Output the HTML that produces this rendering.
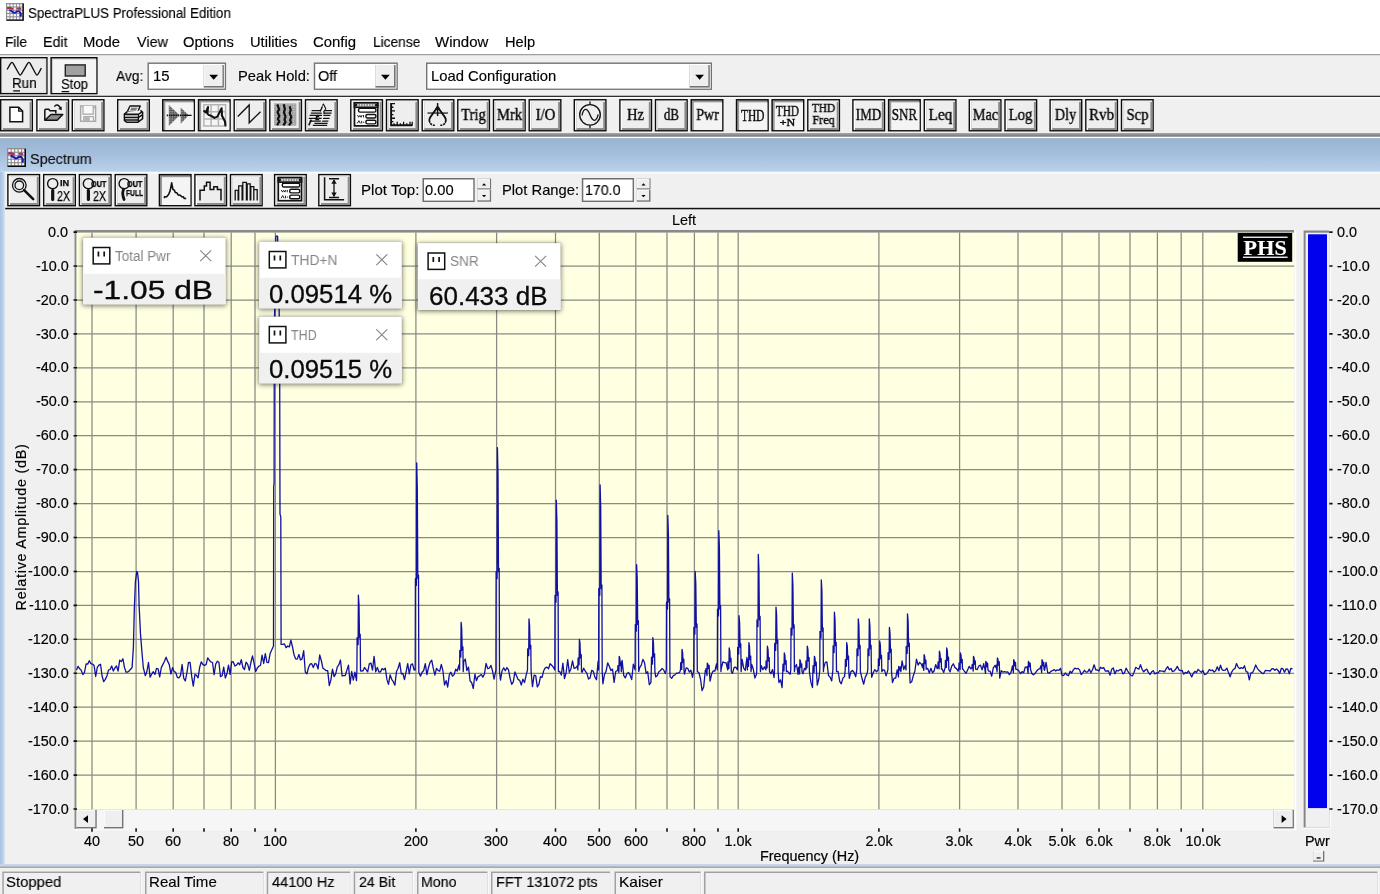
<!DOCTYPE html>
<html><head><meta charset="utf-8"><title>SpectraPLUS Professional Edition</title>
<style>
html,body{margin:0;padding:0;}
body{width:1380px;height:894px;overflow:hidden;background:#f0f0f0;position:relative;font-family:"Liberation Sans",sans-serif;color:#000;}
#root{position:absolute;left:0;top:0;width:1380px;height:894px;opacity:0.999;}
#bg{position:absolute;left:0;top:0;}
.t{position:absolute;white-space:nowrap;line-height:1;-webkit-text-stroke:0.15px currentColor;}
.f{transform-origin:0 50%;}
.t,.yl,.ttl,.val,.s,.i{will-change:transform;}
.bt{position:absolute;}
.bt .s{position:absolute;left:0;right:0;text-align:center;font-family:"Liberation Serif",serif;white-space:nowrap;line-height:1;color:#0a0a0a;transform-origin:50% 50%;-webkit-text-stroke:0.4px #0a0a0a;}
.bt .i{position:absolute;font-family:"Liberation Sans",sans-serif;white-space:nowrap;line-height:1;color:#0a0a0a;transform-origin:0 50%;-webkit-text-stroke:0.25px #0a0a0a;}
.ttl{position:absolute;font-size:14px;color:#858585;line-height:17px;white-space:nowrap;transform-origin:0 50%;}
.val{position:absolute;font-size:25px;line-height:26px;white-space:nowrap;transform-origin:0 50%;color:#0a0a0a;-webkit-text-stroke:0.3px #0a0a0a;}
.yl{position:absolute;font-size:14.4px;line-height:16px;white-space:nowrap;-webkit-text-stroke:0.2px #000;}
</style></head><body><div id="root">
<svg id="bg" width="1380" height="894" viewBox="0 0 1380 894">
<rect x="0.00" y="0.00" width="1380.00" height="54.00" fill="#fff"/>
<g transform="translate(6,3) scale(0.99)"><rect x="0" y="0" width="18" height="18" fill="#8e8e8e"/><g fill="#fff"><rect x="1.2" y="1.3" width="2.2" height="2.2"/><rect x="1.2" y="4.6" width="2.2" height="2.2"/><rect x="1.2" y="7.9" width="2.2" height="2.2"/><rect x="1.2" y="11.2" width="2.2" height="2.2"/><rect x="1.2" y="14.5" width="2.2" height="2.2"/><rect x="4.5" y="1.3" width="2.2" height="2.2"/><rect x="4.5" y="4.6" width="2.2" height="2.2"/><rect x="4.5" y="7.9" width="2.2" height="2.2"/><rect x="4.5" y="11.2" width="2.2" height="2.2"/><rect x="4.5" y="14.5" width="2.2" height="2.2"/><rect x="7.8" y="1.3" width="2.2" height="2.2"/><rect x="7.8" y="4.6" width="2.2" height="2.2"/><rect x="7.8" y="7.9" width="2.2" height="2.2"/><rect x="7.8" y="11.2" width="2.2" height="2.2"/><rect x="7.8" y="14.5" width="2.2" height="2.2"/><rect x="11.1" y="1.3" width="2.2" height="2.2"/><rect x="11.1" y="4.6" width="2.2" height="2.2"/><rect x="11.1" y="7.9" width="2.2" height="2.2"/><rect x="11.1" y="11.2" width="2.2" height="2.2"/><rect x="11.1" y="14.5" width="2.2" height="2.2"/><rect x="14.4" y="1.3" width="2.2" height="2.2"/><rect x="14.4" y="4.6" width="2.2" height="2.2"/><rect x="14.4" y="7.9" width="2.2" height="2.2"/><rect x="14.4" y="11.2" width="2.2" height="2.2"/><rect x="14.4" y="14.5" width="2.2" height="2.2"/></g><path d="M1 5.6C3 4.6 5 4.8 7 6.4M11.4 6.2C12.6 5 14 5.2 15 6.6" stroke="#b02c5c" stroke-width="2.2" fill="none"/><path d="M3.4 7.2C5.4 7.6 6.6 9.6 8.4 9.8C10 10 10.6 8.2 12 8.2C14 8.4 15.4 10.6 15 12.6L14.2 13.6" stroke="#1a1ab4" stroke-width="2" fill="none"/><path d="M17.3 0.6V17.3H0.6" stroke="#0a0a0a" stroke-width="1.4" fill="none"/></g>
<rect x="0.00" y="54.00" width="1380.00" height="1.25" fill="#a0a0a0"/>
<rect x="0.00" y="95.75" width="1380.00" height="1.20" fill="#1a1a1a"/>
<rect x="0.00" y="96.95" width="1380.00" height="1.50" fill="#f9f9f9"/>
<rect x="0.00" y="57.00" width="47.60" height="37.30" fill="#0c0c0c"/>
<rect x="1.40" y="58.40" width="44.80" height="34.50" fill="#f6f6f6"/>
<rect x="2.40" y="59.40" width="43.80" height="33.50" fill="#dcdcdc"/>
<rect x="2.40" y="59.40" width="42.80" height="32.50" fill="#ececec"/>
<g transform="translate(0.00,57.00)"><path transform="translate(-0.1,0.2)" d="M7.2 12.3L10.6 6.4Q12 4 13.4 6.4L19 16.6Q20.3 19 21.6 16.6L27.6 6.4Q29 4 30.4 6.4L35.8 16.6Q37.1 19 38.4 16.6L41.5 11" fill="none" stroke="#111" stroke-width="1.35" stroke-linejoin="round"/><path d="M13.2 33.9h6.8" stroke="#111" stroke-width="1.3"/></g>
<rect x="50.40" y="57.00" width="47.20" height="37.30" fill="#0c0c0c"/>
<rect x="51.80" y="58.40" width="44.40" height="34.50" fill="#cfcfcf"/>
<rect x="53.00" y="59.60" width="43.20" height="33.30" fill="#f5f5f5"/>
<g transform="translate(50.40,57.00)"><rect x="14.9" y="7.9" width="19.9" height="11.1" fill="#a0a0a0" stroke="#222" stroke-width="1.4"/><path d="M11.2 34.6h7.6" stroke="#111" stroke-width="1.3"/></g>
<rect x="147.50" y="62.50" width="78.60" height="27.40" fill="#727272"/>
<rect x="148.90" y="63.90" width="75.90" height="24.70" fill="#fff"/>
<rect x="203.70" y="65.10" width="20.20" height="22.50" fill="#747474"/>
<rect x="203.70" y="65.10" width="18.60" height="20.90" fill="#fafafa"/>
<rect x="204.70" y="66.10" width="17.60" height="19.90" fill="#efefef"/>
<path transform="translate(203.70,65.10)" d="M5.6 9.6H14.4L10 14.6Z" fill="#000"/>
<rect x="313.80" y="62.50" width="84.00" height="27.40" fill="#727272"/>
<rect x="315.20" y="63.90" width="81.30" height="24.70" fill="#fff"/>
<rect x="375.40" y="65.10" width="20.20" height="22.50" fill="#747474"/>
<rect x="375.40" y="65.10" width="18.60" height="20.90" fill="#fafafa"/>
<rect x="376.40" y="66.10" width="17.60" height="19.90" fill="#efefef"/>
<path transform="translate(375.40,65.10)" d="M5.6 9.6H14.4L10 14.6Z" fill="#000"/>
<rect x="426.00" y="62.50" width="286.00" height="27.40" fill="#727272"/>
<rect x="427.40" y="63.90" width="283.30" height="24.70" fill="#fff"/>
<rect x="689.60" y="65.10" width="20.20" height="22.50" fill="#747474"/>
<rect x="689.60" y="65.10" width="18.60" height="20.90" fill="#fafafa"/>
<rect x="690.60" y="66.10" width="17.60" height="19.90" fill="#efefef"/>
<path transform="translate(689.60,65.10)" d="M5.6 9.6H14.4L10 14.6Z" fill="#000"/>
<rect x="0.00" y="99.05" width="33.00" height="32.40" fill="#0c0c0c"/>
<rect x="1.40" y="100.45" width="30.20" height="29.60" fill="#fdfdfd"/>
<rect x="2.80" y="101.85" width="28.80" height="28.20" fill="#8c8c8c"/>
<rect x="2.80" y="101.85" width="26.80" height="26.20" fill="#eeeeee"/>
<g transform="translate(0.00,99.05)"><path d="M9.9 8.3H18.7L22.6 12V22.6H9.9Z" fill="#fff" stroke="#111" stroke-width="1.5"/><path d="M18.7 8.3V12H22.6" stroke="#111" fill="none" stroke-width="1.3"/></g>
<rect x="36.20" y="99.05" width="33.00" height="32.40" fill="#0c0c0c"/>
<rect x="37.60" y="100.45" width="30.20" height="29.60" fill="#fdfdfd"/>
<rect x="39.00" y="101.85" width="28.80" height="28.20" fill="#8c8c8c"/>
<rect x="39.00" y="101.85" width="26.80" height="26.20" fill="#eeeeee"/>
<g transform="translate(36.20,99.05)"><path d="M8.6 21V11.2Q8.6 10.3 9.6 10.3H12.6L13.8 11.8H19.6V14.5" stroke="#111" fill="none" stroke-width="1.5"/><path d="M14.8 15.4H26.6L20.9 21.2H8.6Z" fill="#8c8c8c" stroke="#111" stroke-width="1.4" stroke-linejoin="round"/><path d="M18.2 7.6Q20.6 4.6 23 7.2L24.4 9" stroke="#111" fill="none" stroke-width="1.45"/><path d="M25.6 11.2L22 9.9L25.4 7.4Z" fill="#111"/></g>
<rect x="71.60" y="99.05" width="33.00" height="32.40" fill="#0c0c0c"/>
<rect x="73.00" y="100.45" width="30.20" height="29.60" fill="#fdfdfd"/>
<rect x="74.40" y="101.85" width="28.80" height="28.20" fill="#8c8c8c"/>
<rect x="74.40" y="101.85" width="26.80" height="26.20" fill="#eeeeee"/>
<g transform="translate(71.60,99.05)"><rect x="9" y="7" width="15" height="15.2" fill="#f4f4f4" stroke="#a6a6a6" stroke-width="1.4"/><path d="M11.4 7V15H21.6V7" fill="#fafafa" stroke="#a6a6a6" stroke-width="1.2"/><rect x="12.2" y="17.6" width="9.6" height="4.6" fill="#f8f8f8" stroke="#a6a6a6" stroke-width="1.1"/><rect x="12.6" y="18" width="5.6" height="4" fill="#b4b4b4"/><rect x="22.2" y="8" width="1" height="1.6" fill="#aaa"/></g>
<rect x="117.00" y="99.05" width="33.00" height="32.40" fill="#0c0c0c"/>
<rect x="118.40" y="100.45" width="30.20" height="29.60" fill="#fdfdfd"/>
<rect x="119.80" y="101.85" width="28.80" height="28.20" fill="#8c8c8c"/>
<rect x="119.80" y="101.85" width="26.80" height="26.20" fill="#eeeeee"/>
<g transform="translate(117.00,99.05)"><path d="M13 6.9H23.2L20.8 12.8H10.2Z" fill="#f4f4f4" stroke="#111" stroke-width="1.4" stroke-linejoin="round"/><path d="M14 9.2H20.4M13.4 10.9H19.4" stroke="#555" stroke-width="1.2"/><path d="M10.2 12.8L7.4 15V21.4L9.6 23.2H21L25.6 19.6V13.2L23.4 11.4" fill="#f0f0f0" stroke="#111" stroke-width="1.5" stroke-linejoin="round"/><path d="M7.4 15.2H21.4L25.4 12.6M7.6 18.4H21.4L25.4 15.8M7.6 21H21.2M21.4 15.2V23" stroke="#111" fill="none" stroke-width="1.4"/><path d="M9 16.9H20" stroke="#999" stroke-width="1.4"/></g>
<rect x="162.00" y="99.05" width="33.00" height="32.40" fill="#0c0c0c"/>
<rect x="163.40" y="100.45" width="30.20" height="29.60" fill="#989898"/>
<rect x="165.30" y="102.35" width="28.30" height="27.70" fill="#f4f4f4"/>
<g transform="translate(162.00,99.05)"><defs><pattern id="ht" width="1.7" height="1.7" patternUnits="userSpaceOnUse"><rect width="1.7" height="1.7" fill="#5e5e5e"/><rect x="0" y="0" width="0.75" height="0.75" fill="#cfcfcf"/></pattern></defs><path d="M6.8 5.9L17.6 16.3L6.8 27Z" fill="url(#ht)"/><path d="M18.7 8.4L26.7 16.3L18.7 24.6Z" fill="url(#ht)"/><path d="M4.8 16.3H24" stroke="#111" stroke-width="1.9" stroke-dasharray="1.4 0.8"/><path d="M22 16.3H29.6" stroke="#111" stroke-width="1.3"/></g>
<rect x="197.80" y="99.05" width="33.00" height="32.40" fill="#0c0c0c"/>
<rect x="199.20" y="100.45" width="30.20" height="29.60" fill="#989898"/>
<rect x="201.10" y="102.35" width="28.30" height="27.70" fill="#f4f4f4"/>
<g transform="translate(197.80,99.05)"><path d="M6.1 5.7H27.8V27H6.1ZM13.3 5.7V27M20.6 5.7V27M6.1 12.8H27.8M6.1 20H27.8" stroke="#b4b4b4" stroke-width="1.5" fill="#f6f6f6"/><path d="M6.3 12L8 13.4L10.2 8L9.6 14.6Q10.4 16.4 13 16.6L16.6 18.8L19.6 17.6L23.8 9.2L24.2 16.6L27.2 22.4L27.6 26.4" stroke="#111" fill="none" stroke-width="2.1" stroke-linejoin="round" stroke-linecap="round"/></g>
<rect x="233.50" y="99.05" width="33.00" height="32.40" fill="#0c0c0c"/>
<rect x="234.90" y="100.45" width="30.20" height="29.60" fill="#fdfdfd"/>
<rect x="236.30" y="101.85" width="28.80" height="28.20" fill="#8c8c8c"/>
<rect x="236.30" y="101.85" width="26.80" height="26.20" fill="#eeeeee"/>
<g transform="translate(233.50,99.05)"><path d="M4.3 17.4L15.7 5.9V23.8L27 12.6" stroke="#111" fill="none" stroke-width="1.35" stroke-linejoin="miter"/></g>
<rect x="269.10" y="99.05" width="33.00" height="32.40" fill="#0c0c0c"/>
<rect x="270.50" y="100.45" width="30.20" height="29.60" fill="#fdfdfd"/>
<rect x="271.90" y="101.85" width="28.80" height="28.20" fill="#8c8c8c"/>
<rect x="271.90" y="101.85" width="26.80" height="26.20" fill="#eeeeee"/>
<g transform="translate(269.10,99.05)"><defs><pattern id="dt" width="2.4" height="2.4" patternUnits="userSpaceOnUse"><rect width="2.4" height="2.4" fill="#9c9c9c"/><rect x="0.2" y="0.2" width="1.1" height="1.1" fill="#d8d8d8"/></pattern></defs><rect x="4.9" y="4.4" width="22.4" height="22.3" fill="url(#dt)"/><path d="M8.2 5.4L10 10.4L8.4 13L10.2 17L8.8 20L10.2 22.4L8 26.2" stroke="#111" fill="none" stroke-width="2.2" stroke-linejoin="round"/><path d="M14.6 5.2L15.8 10L14.8 13.4L16.4 17.6L15.4 20.6L16.4 23L14.2 26.4" stroke="#111" fill="none" stroke-width="2.2" stroke-linejoin="round"/><path d="M20.6 7.2L21.6 11L20.6 14L22.2 18L21 21L22 23.4L19.8 26.4" stroke="#111" fill="none" stroke-width="2.2" stroke-linejoin="round"/></g>
<rect x="304.80" y="99.05" width="33.00" height="32.40" fill="#0c0c0c"/>
<rect x="306.20" y="100.45" width="30.20" height="29.60" fill="#fdfdfd"/>
<rect x="307.60" y="101.85" width="28.80" height="28.20" fill="#8c8c8c"/>
<rect x="307.60" y="101.85" width="26.80" height="26.20" fill="#eeeeee"/>
<g transform="translate(304.80,99.05)"><path d="M6.8 11.6H27.2M6 14H26.8M4.8 16.4H25.6M4 19.2H24.8M4.8 22H23.6M9.6 24.4H22.8M8 26.4H22.4" stroke="#111" stroke-width="1.25"/><path d="M15.4 12.4L18.6 5.2L20.8 9.6L19 12L19.4 15" fill="#f0f0f0" stroke="#111" stroke-width="1.4" stroke-linejoin="round"/><path d="M18 6.4L19.6 9.6L17.6 12.4L18 18L16.4 22.8" stroke="#f0f0f0" stroke-width="1.3" fill="none"/><path d="M11.2 16.4Q12.8 15 14.4 16.4V21.2H10.4Z" fill="#111"/><path d="M4 26.4L6.6 20.6" stroke="#111" stroke-width="1.6"/><path d="M12.8 18.2h1v1h-1z" fill="#fff"/></g>
<rect x="350.10" y="99.05" width="33.00" height="32.40" fill="#0c0c0c"/>
<rect x="351.50" y="100.45" width="30.20" height="29.60" fill="#fdfdfd"/>
<rect x="352.90" y="101.85" width="28.80" height="28.20" fill="#8c8c8c"/>
<rect x="352.90" y="101.85" width="26.80" height="26.20" fill="#eeeeee"/>
<g transform="translate(350.10,99.05)"><rect x="4.4" y="3.8" width="23.2" height="23" fill="#fff" stroke="#111" stroke-width="1.7"/><rect x="4.4" y="3.8" width="23.2" height="4.4" fill="#fff" stroke="#111" stroke-width="1.7"/><path d="M7.6 6H24.4" stroke="#333" stroke-width="1.5" stroke-dasharray="0.8 0.8"/><path d="M5 6H7M25 6H27" stroke="#111" stroke-width="2.6"/><rect x="8.4" y="9.3" width="17.4" height="3.8" rx="1.6" fill="#fff" stroke="#111" stroke-width="1.4"/><rect x="15.8" y="15.4" width="10" height="3.6" rx="1.5" fill="#fff" stroke="#111" stroke-width="1.4"/><rect x="15.8" y="21.2" width="10" height="3.6" rx="1.5" fill="#fff" stroke="#111" stroke-width="1.4"/><path d="M7.4 16L8.6 18.2L9.8 16.4L11 18.2L12 16M13.4 16V18.4M7.2 24.4L8.8 21.6L10.2 24.4M11.6 21.8V24.4M13 23.2h1.2" stroke="#222" stroke-width="1" fill="none"/></g>
<rect x="385.80" y="99.05" width="33.00" height="32.40" fill="#0c0c0c"/>
<rect x="387.20" y="100.45" width="30.20" height="29.60" fill="#fdfdfd"/>
<rect x="388.60" y="101.85" width="28.80" height="28.20" fill="#8c8c8c"/>
<rect x="388.60" y="101.85" width="26.80" height="26.20" fill="#eeeeee"/>
<g transform="translate(385.80,99.05)"><path d="M5.3 4V26.2H26.8" stroke="#111" fill="none" stroke-width="1.9"/><path d="M5.3 4.6H9.2M5.3 8.2H7.6M5.3 11.9H9.2M5.3 15.6H7.6M5.3 19.2H9.2M5.3 22.6H7.6M8.2 26V24.2M11.4 26V22.6M14.6 26V24.2M17.8 26V22.6M21 26V24.2M24.2 26V22.6M26.4 26V22.6" stroke="#111" stroke-width="1.3"/></g>
<rect x="421.50" y="99.05" width="33.00" height="32.40" fill="#0c0c0c"/>
<rect x="422.90" y="100.45" width="30.20" height="29.60" fill="#fdfdfd"/>
<rect x="424.30" y="101.85" width="28.80" height="28.20" fill="#8c8c8c"/>
<rect x="424.30" y="101.85" width="26.80" height="26.20" fill="#eeeeee"/>
<g transform="translate(421.50,99.05)"><path d="M6 14H26.4" stroke="#111" stroke-width="1.2"/><path d="M16.1 4V17" stroke="#111" stroke-width="1.5"/><path d="M15.7 8.6L10.6 15.6Q6.2 21 8.6 23.6" stroke="#111" fill="none" stroke-width="1.8"/><path d="M16.5 8.6L21.6 15.6Q26 21 23.6 23.6" stroke="#111" fill="none" stroke-width="1.8"/><path d="M8.8 24.2Q10.6 26.4 13.4 26.2M23.4 24.2Q21.6 26.4 18.8 26.2" stroke="#111" fill="none" stroke-width="1.7" stroke-dasharray="2.2 1"/><circle cx="16.1" cy="9.2" r="1.9" fill="#111"/></g>
<rect x="457.10" y="99.05" width="33.00" height="32.40" fill="#0c0c0c"/>
<rect x="458.50" y="100.45" width="30.20" height="29.60" fill="#fdfdfd"/>
<rect x="459.90" y="101.85" width="28.80" height="28.20" fill="#8c8c8c"/>
<rect x="459.90" y="101.85" width="26.80" height="26.20" fill="#eeeeee"/>
<rect x="492.80" y="99.05" width="33.00" height="32.40" fill="#0c0c0c"/>
<rect x="494.20" y="100.45" width="30.20" height="29.60" fill="#fdfdfd"/>
<rect x="495.60" y="101.85" width="28.80" height="28.20" fill="#8c8c8c"/>
<rect x="495.60" y="101.85" width="26.80" height="26.20" fill="#eeeeee"/>
<rect x="528.50" y="99.05" width="33.00" height="32.40" fill="#0c0c0c"/>
<rect x="529.90" y="100.45" width="30.20" height="29.60" fill="#fdfdfd"/>
<rect x="531.30" y="101.85" width="28.80" height="28.20" fill="#8c8c8c"/>
<rect x="531.30" y="101.85" width="26.80" height="26.20" fill="#eeeeee"/>
<rect x="573.60" y="99.05" width="33.00" height="32.40" fill="#0c0c0c"/>
<rect x="575.00" y="100.45" width="30.20" height="29.60" fill="#fdfdfd"/>
<rect x="576.40" y="101.85" width="28.80" height="28.20" fill="#8c8c8c"/>
<rect x="576.40" y="101.85" width="26.80" height="26.20" fill="#eeeeee"/>
<g transform="translate(573.60,99.05)"><circle cx="16.4" cy="15.8" r="10.3" stroke="#111" fill="none" stroke-width="1.35"/><path d="M16.4 2.4V5.4M16.4 26.2V29.2" stroke="#111" stroke-width="1.3"/><path d="M8.4 16.4C10 8.4 13.6 8.6 16.4 15.8S22.8 23.4 24.6 15.4" stroke="#111" fill="none" stroke-width="1.35"/></g>
<rect x="619.20" y="99.05" width="33.00" height="32.40" fill="#0c0c0c"/>
<rect x="620.60" y="100.45" width="30.20" height="29.60" fill="#fdfdfd"/>
<rect x="622.00" y="101.85" width="28.80" height="28.20" fill="#8c8c8c"/>
<rect x="622.00" y="101.85" width="26.80" height="26.20" fill="#eeeeee"/>
<rect x="654.80" y="99.05" width="33.00" height="32.40" fill="#0c0c0c"/>
<rect x="656.20" y="100.45" width="30.20" height="29.60" fill="#fdfdfd"/>
<rect x="657.60" y="101.85" width="28.80" height="28.20" fill="#8c8c8c"/>
<rect x="657.60" y="101.85" width="26.80" height="26.20" fill="#eeeeee"/>
<rect x="690.50" y="99.05" width="33.00" height="32.40" fill="#0c0c0c"/>
<rect x="691.90" y="100.45" width="30.20" height="29.60" fill="#989898"/>
<rect x="693.80" y="102.35" width="28.30" height="27.70" fill="#f4f4f4"/>
<rect x="735.80" y="99.05" width="33.00" height="32.40" fill="#0c0c0c"/>
<rect x="737.20" y="100.45" width="30.20" height="29.60" fill="#989898"/>
<rect x="739.10" y="102.35" width="28.30" height="27.70" fill="#f4f4f4"/>
<rect x="771.40" y="99.05" width="33.00" height="32.40" fill="#0c0c0c"/>
<rect x="772.80" y="100.45" width="30.20" height="29.60" fill="#989898"/>
<rect x="774.70" y="102.35" width="28.30" height="27.70" fill="#f4f4f4"/>
<rect x="807.10" y="99.05" width="33.00" height="32.40" fill="#0c0c0c"/>
<rect x="808.50" y="100.45" width="30.20" height="29.60" fill="#fdfdfd"/>
<rect x="809.90" y="101.85" width="28.80" height="28.20" fill="#8c8c8c"/>
<rect x="809.90" y="101.85" width="26.80" height="26.20" fill="#eeeeee"/>
<rect x="852.20" y="99.05" width="33.00" height="32.40" fill="#0c0c0c"/>
<rect x="853.60" y="100.45" width="30.20" height="29.60" fill="#fdfdfd"/>
<rect x="855.00" y="101.85" width="28.80" height="28.20" fill="#8c8c8c"/>
<rect x="855.00" y="101.85" width="26.80" height="26.20" fill="#eeeeee"/>
<rect x="887.90" y="99.05" width="33.00" height="32.40" fill="#0c0c0c"/>
<rect x="889.30" y="100.45" width="30.20" height="29.60" fill="#989898"/>
<rect x="891.20" y="102.35" width="28.30" height="27.70" fill="#f4f4f4"/>
<rect x="923.60" y="99.05" width="33.00" height="32.40" fill="#0c0c0c"/>
<rect x="925.00" y="100.45" width="30.20" height="29.60" fill="#fdfdfd"/>
<rect x="926.40" y="101.85" width="28.80" height="28.20" fill="#8c8c8c"/>
<rect x="926.40" y="101.85" width="26.80" height="26.20" fill="#eeeeee"/>
<rect x="968.60" y="99.05" width="33.00" height="32.40" fill="#0c0c0c"/>
<rect x="970.00" y="100.45" width="30.20" height="29.60" fill="#fdfdfd"/>
<rect x="971.40" y="101.85" width="28.80" height="28.20" fill="#8c8c8c"/>
<rect x="971.40" y="101.85" width="26.80" height="26.20" fill="#eeeeee"/>
<rect x="1004.30" y="99.05" width="33.00" height="32.40" fill="#0c0c0c"/>
<rect x="1005.70" y="100.45" width="30.20" height="29.60" fill="#fdfdfd"/>
<rect x="1007.10" y="101.85" width="28.80" height="28.20" fill="#8c8c8c"/>
<rect x="1007.10" y="101.85" width="26.80" height="26.20" fill="#eeeeee"/>
<rect x="1049.40" y="99.05" width="33.00" height="32.40" fill="#0c0c0c"/>
<rect x="1050.80" y="100.45" width="30.20" height="29.60" fill="#fdfdfd"/>
<rect x="1052.20" y="101.85" width="28.80" height="28.20" fill="#8c8c8c"/>
<rect x="1052.20" y="101.85" width="26.80" height="26.20" fill="#eeeeee"/>
<rect x="1085.10" y="99.05" width="33.00" height="32.40" fill="#0c0c0c"/>
<rect x="1086.50" y="100.45" width="30.20" height="29.60" fill="#fdfdfd"/>
<rect x="1087.90" y="101.85" width="28.80" height="28.20" fill="#8c8c8c"/>
<rect x="1087.90" y="101.85" width="26.80" height="26.20" fill="#eeeeee"/>
<rect x="1120.80" y="99.05" width="33.00" height="32.40" fill="#0c0c0c"/>
<rect x="1122.20" y="100.45" width="30.20" height="29.60" fill="#fdfdfd"/>
<rect x="1123.60" y="101.85" width="28.80" height="28.20" fill="#8c8c8c"/>
<rect x="1123.60" y="101.85" width="26.80" height="26.20" fill="#eeeeee"/>
<defs><linearGradient id="gb" x1="0" y1="0" x2="0" y2="1"><stop offset="0" stop-color="#a6a6a6"/><stop offset="0.55" stop-color="#8c8c8c"/><stop offset="1" stop-color="#6c6c6c"/></linearGradient><linearGradient id="gt" x1="0" y1="0" x2="0" y2="1"><stop offset="0" stop-color="#98b3d2"/><stop offset="0.5" stop-color="#a5bfdc"/><stop offset="1" stop-color="#bad2eb"/></linearGradient><linearGradient id="gl" x1="0" y1="0" x2="1" y2="0"><stop offset="0" stop-color="#a6c2e3"/><stop offset="1" stop-color="#c8dbef"/></linearGradient></defs>
<rect x="0.00" y="133.00" width="1380.00" height="3.80" fill="url(#gb)"/>
<rect x="0.00" y="136.80" width="1380.00" height="1.30" fill="#fcfcfc"/>
<rect x="0.00" y="138.10" width="1380.00" height="33.70" fill="url(#gt)"/>
<rect x="0.00" y="171.80" width="1380.00" height="1.90" fill="#f7fafd"/>
<rect x="0.00" y="171.80" width="4.60" height="693.00" fill="url(#gl)"/>
<rect x="0.00" y="864.00" width="1380.00" height="2.30" fill="#c5d6ea"/>
<rect x="0.00" y="866.40" width="1380.00" height="1.40" fill="#9a9a9a"/>
<g transform="translate(7,148) scale(1.055)"><rect x="0" y="0" width="18" height="18" fill="#8e8e8e"/><g fill="#fff"><rect x="1.2" y="1.3" width="2.2" height="2.2"/><rect x="1.2" y="4.6" width="2.2" height="2.2"/><rect x="1.2" y="7.9" width="2.2" height="2.2"/><rect x="1.2" y="11.2" width="2.2" height="2.2"/><rect x="1.2" y="14.5" width="2.2" height="2.2"/><rect x="4.5" y="1.3" width="2.2" height="2.2"/><rect x="4.5" y="4.6" width="2.2" height="2.2"/><rect x="4.5" y="7.9" width="2.2" height="2.2"/><rect x="4.5" y="11.2" width="2.2" height="2.2"/><rect x="4.5" y="14.5" width="2.2" height="2.2"/><rect x="7.8" y="1.3" width="2.2" height="2.2"/><rect x="7.8" y="4.6" width="2.2" height="2.2"/><rect x="7.8" y="7.9" width="2.2" height="2.2"/><rect x="7.8" y="11.2" width="2.2" height="2.2"/><rect x="7.8" y="14.5" width="2.2" height="2.2"/><rect x="11.1" y="1.3" width="2.2" height="2.2"/><rect x="11.1" y="4.6" width="2.2" height="2.2"/><rect x="11.1" y="7.9" width="2.2" height="2.2"/><rect x="11.1" y="11.2" width="2.2" height="2.2"/><rect x="11.1" y="14.5" width="2.2" height="2.2"/><rect x="14.4" y="1.3" width="2.2" height="2.2"/><rect x="14.4" y="4.6" width="2.2" height="2.2"/><rect x="14.4" y="7.9" width="2.2" height="2.2"/><rect x="14.4" y="11.2" width="2.2" height="2.2"/><rect x="14.4" y="14.5" width="2.2" height="2.2"/></g><path d="M1 5.6C3 4.6 5 4.8 7 6.4M11.4 6.2C12.6 5 14 5.2 15 6.6" stroke="#b02c5c" stroke-width="2.2" fill="none"/><path d="M3.4 7.2C5.4 7.6 6.6 9.6 8.4 9.8C10 10 10.6 8.2 12 8.2C14 8.4 15.4 10.6 15 12.6L14.2 13.6" stroke="#1a1ab4" stroke-width="2" fill="none"/><path d="M17.3 0.6V17.3H0.6" stroke="#0a0a0a" stroke-width="1.4" fill="none"/></g>
<rect x="7.20" y="173.90" width="33.00" height="32.50" fill="#0c0c0c"/>
<rect x="8.60" y="175.30" width="30.20" height="29.70" fill="#fdfdfd"/>
<rect x="10.00" y="176.70" width="28.80" height="28.30" fill="#8c8c8c"/>
<rect x="10.00" y="176.70" width="26.80" height="26.30" fill="#eeeeee"/>
<g transform="translate(7.20,173.90)"><circle cx="12.1" cy="11.4" r="6.8" stroke="#111" fill="none" stroke-width="1.3"/><circle cx="12.1" cy="11.4" r="4.3" stroke="#111" fill="none" stroke-width="1.3"/><path d="M16.9 16.2L26 25.2" stroke="#111" stroke-width="2.6" stroke-linecap="round"/></g>
<rect x="43.00" y="173.90" width="33.00" height="32.50" fill="#0c0c0c"/>
<rect x="44.40" y="175.30" width="30.20" height="29.70" fill="#fdfdfd"/>
<rect x="45.80" y="176.70" width="28.80" height="28.30" fill="#8c8c8c"/>
<rect x="45.80" y="176.70" width="26.80" height="26.30" fill="#eeeeee"/>
<g transform="translate(43.00,173.90)"><circle cx="9.7" cy="9.8" r="5.1" stroke="#111" fill="none" stroke-width="1.4"/><path d="M9.7 16.6V25.6" stroke="#111" stroke-width="3.2" stroke-linecap="round"/><path d="M9.7 14.9V16.5" stroke="#111" stroke-width="1.3"/></g>
<rect x="78.70" y="173.90" width="33.00" height="32.50" fill="#0c0c0c"/>
<rect x="80.10" y="175.30" width="30.20" height="29.70" fill="#fdfdfd"/>
<rect x="81.50" y="176.70" width="28.80" height="28.30" fill="#8c8c8c"/>
<rect x="81.50" y="176.70" width="26.80" height="26.30" fill="#eeeeee"/>
<g transform="translate(78.70,173.90)"><circle cx="9.7" cy="9.8" r="5.1" stroke="#111" fill="none" stroke-width="1.4"/><path d="M9.7 16.6V25.6" stroke="#111" stroke-width="3.2" stroke-linecap="round"/><path d="M9.7 14.9V16.5" stroke="#111" stroke-width="1.3"/></g>
<rect x="114.50" y="173.90" width="33.00" height="32.50" fill="#0c0c0c"/>
<rect x="115.90" y="175.30" width="30.20" height="29.70" fill="#fdfdfd"/>
<rect x="117.30" y="176.70" width="28.80" height="28.30" fill="#8c8c8c"/>
<rect x="117.30" y="176.70" width="26.80" height="26.30" fill="#eeeeee"/>
<g transform="translate(114.50,173.90)"><circle cx="9.7" cy="9.8" r="5.1" stroke="#111" fill="none" stroke-width="1.4"/><path d="M9 15.4Q7.6 19 8.6 22.6L9.6 25.6" stroke="#111" stroke-width="2.8" stroke-linecap="round" fill="none"/></g>
<rect x="158.70" y="173.90" width="33.00" height="32.50" fill="#0c0c0c"/>
<rect x="160.10" y="175.30" width="30.20" height="29.70" fill="#989898"/>
<rect x="162.00" y="177.20" width="28.30" height="27.80" fill="#f4f4f4"/>
<g transform="translate(158.70,173.90)"><path d="M5.8 24.4V22.8H8L10 20.4L11.4 17L13 9L14.2 15.4L15.6 16.2L16.6 18.6L18.4 19.2L19.4 21L21.6 21.4L23 22.8L24.6 23L25.6 24.6H27.5" stroke="#111" fill="none" stroke-width="1.6" stroke-linejoin="round"/></g>
<rect x="194.20" y="173.90" width="33.00" height="32.50" fill="#0c0c0c"/>
<rect x="195.60" y="175.30" width="30.20" height="29.70" fill="#fdfdfd"/>
<rect x="197.00" y="176.70" width="28.80" height="28.30" fill="#8c8c8c"/>
<rect x="197.00" y="176.70" width="26.80" height="26.30" fill="#eeeeee"/>
<g transform="translate(194.20,173.90)"><path d="M5.8 26.5V16.4H10.1V12H12.3V8.4H15.9V15.7H19.6V12.8H23.2V15.7H26.8V26.5" stroke="#111" fill="none" stroke-width="1.5"/></g>
<rect x="229.80" y="173.90" width="33.00" height="32.50" fill="#0c0c0c"/>
<rect x="231.20" y="175.30" width="30.20" height="29.70" fill="#fdfdfd"/>
<rect x="232.60" y="176.70" width="28.80" height="28.30" fill="#8c8c8c"/>
<rect x="232.60" y="176.70" width="26.80" height="26.30" fill="#eeeeee"/>
<g transform="translate(229.80,173.90)"><path d="M5.4 26.5V16.4H8.3V26.5M8.9 26.5V12H12.3V26.5M13 26.5V8.4H16.6V26.5M17.4 26.5V9.9H20.4V26.5M21 26.5V12.8H24V26.5M24.2 15.7H27.4V26.5" stroke="#111" fill="none" stroke-width="1.3"/></g>
<rect x="273.90" y="173.90" width="33.00" height="32.50" fill="#0c0c0c"/>
<rect x="275.30" y="175.30" width="30.20" height="29.70" fill="#fdfdfd"/>
<rect x="276.70" y="176.70" width="28.80" height="28.30" fill="#8c8c8c"/>
<rect x="276.70" y="176.70" width="26.80" height="26.30" fill="#eeeeee"/>
<g transform="translate(273.90,173.90)"><rect x="4.4" y="3.8" width="23.2" height="23" fill="#fff" stroke="#111" stroke-width="1.7"/><rect x="4.4" y="3.8" width="23.2" height="4.4" fill="#fff" stroke="#111" stroke-width="1.7"/><path d="M7.6 6H24.4" stroke="#333" stroke-width="1.5" stroke-dasharray="0.8 0.8"/><path d="M5 6H7M25 6H27" stroke="#111" stroke-width="2.6"/><rect x="8.4" y="9.3" width="17.4" height="3.8" rx="1.6" fill="#fff" stroke="#111" stroke-width="1.4"/><rect x="15.8" y="15.4" width="10" height="3.6" rx="1.5" fill="#fff" stroke="#111" stroke-width="1.4"/><rect x="15.8" y="21.2" width="10" height="3.6" rx="1.5" fill="#fff" stroke="#111" stroke-width="1.4"/><path d="M7.4 16L8.6 18.2L9.8 16.4L11 18.2L12 16M13.4 16V18.4M7.2 24.4L8.8 21.6L10.2 24.4M11.6 21.8V24.4M13 23.2h1.2" stroke="#222" stroke-width="1" fill="none"/></g>
<rect x="318.10" y="173.90" width="33.00" height="32.50" fill="#0c0c0c"/>
<rect x="319.50" y="175.30" width="30.20" height="29.70" fill="#fdfdfd"/>
<rect x="320.90" y="176.70" width="28.80" height="28.30" fill="#8c8c8c"/>
<rect x="320.90" y="176.70" width="26.80" height="26.30" fill="#eeeeee"/>
<g transform="translate(318.10,173.90)"><path d="M6.5 3.3V25.8H26" stroke="#111" fill="none" stroke-width="1.5"/><path d="M10.9 4.9H21M10.9 23.5H21" stroke="#111" stroke-width="1.5"/><path d="M15.9 6V22.4" stroke="#111" stroke-width="1.3"/><path d="M15.9 5.4L13.2 9.8H18.6ZM15.9 23L13.2 18.6H18.6Z" fill="#111"/></g>
<rect x="5.20" y="207.80" width="1375.00" height="1.50" fill="#111"/>
<rect x="422.50" y="178.00" width="52.20" height="24.00" fill="#6e6e6e"/>
<rect x="424.00" y="179.50" width="49.30" height="21.10" fill="#fff"/>
<rect x="477.40" y="178.50" width="13.70" height="10.90" fill="#747474"/>
<rect x="477.40" y="178.50" width="12.50" height="9.70" fill="#fafafa"/>
<rect x="478.40" y="179.50" width="11.50" height="8.70" fill="#efefef"/>
<path transform="translate(477.40,178.50)" d="M4.6 7.1H8.8L6.7 4.7Z" fill="#000"/>
<rect x="477.40" y="189.90" width="13.70" height="11.80" fill="#747474"/>
<rect x="477.40" y="189.90" width="12.20" height="10.30" fill="#fafafa"/>
<rect x="478.40" y="190.90" width="11.20" height="9.30" fill="#efefef"/>
<path transform="translate(477.40,189.90)" d="M4.6 5H8.8L6.7 7.4Z" fill="#000"/>
<rect x="581.80" y="178.00" width="52.20" height="24.00" fill="#6e6e6e"/>
<rect x="583.30" y="179.50" width="49.30" height="21.10" fill="#fff"/>
<rect x="636.80" y="178.50" width="13.70" height="10.90" fill="#747474"/>
<rect x="636.80" y="178.50" width="12.50" height="9.70" fill="#fafafa"/>
<rect x="637.80" y="179.50" width="11.50" height="8.70" fill="#efefef"/>
<path transform="translate(636.80,178.50)" d="M4.6 7.1H8.8L6.7 4.7Z" fill="#000"/>
<rect x="636.80" y="189.90" width="13.70" height="11.80" fill="#747474"/>
<rect x="636.80" y="189.90" width="12.20" height="10.30" fill="#fafafa"/>
<rect x="637.80" y="190.90" width="11.20" height="9.30" fill="#efefef"/>
<path transform="translate(636.80,189.90)" d="M4.6 5H8.8L6.7 7.4Z" fill="#000"/>
<rect x="74.50" y="230.00" width="1221.80" height="600.20" fill="#fff"/>
<rect x="74.50" y="230.00" width="1219.60" height="599.00" fill="#8a8a8a"/>
<rect x="76.40" y="232.60" width="1217.70" height="576.60" fill="#ffffe1"/>
<rect x="76.40" y="809.20" width="1217.70" height="20.40" fill="#f6f6f6"/>
<path d="M76.4 266.0H1294.1M76.4 300.0H1294.1M76.4 333.9H1294.1M76.4 367.8H1294.1M76.4 401.8H1294.1M76.4 435.7H1294.1M76.4 469.6H1294.1M76.4 503.6H1294.1M76.4 537.5H1294.1M76.4 571.5H1294.1M76.4 605.4H1294.1M76.4 639.3H1294.1M76.4 673.3H1294.1M76.4 707.2H1294.1M76.4 741.1H1294.1M76.4 775.1H1294.1M92.0 232.6V809.2M136.1 232.6V809.2M173.2 232.6V809.2M204.0 232.6V809.2M231.2 232.6V809.2M255.0 232.6V809.2M275.4 232.6V809.2M415.9 232.6V809.2M496.6 232.6V809.2M555.5 232.6V809.2M599.3 232.6V809.2M635.8 232.6V809.2M667.0 232.6V809.2M694.4 232.6V809.2M718.0 232.6V809.2M738.2 232.6V809.2M878.9 232.6V809.2M959.6 232.6V809.2M1018.0 232.6V809.2M1062.0 232.6V809.2M1099.0 232.6V809.2M1130.0 232.6V809.2M1157.4 232.6V809.2M1181.2 232.6V809.2M1202.8 232.6V809.2" stroke="#8a8a83" stroke-width="1.25" fill="none"/>
<polyline points="76.5,669.9 78.1,666.3 79.7,668.8 81.3,670.4 82.9,674.6 84.5,672.4 86.1,664.0 87.7,664.1 89.3,660.7 90.9,663.6 92.5,664.1 94.1,665.5 95.7,676.5 97.3,667.3 98.9,665.1 100.5,664.2 102.1,676.0 103.7,681.7 105.3,679.4 106.9,676.0 108.5,670.2 110.1,669.5 111.7,666.0 113.3,671.0 114.9,667.9 116.5,666.0 118.1,671.1 119.7,660.1 121.3,661.6 122.9,658.7 124.5,667.6 126.1,672.2 127.7,672.1 129.3,670.7 132.1,667.5 133.4,647.1 134.3,610.1 135.4,581.6 136.8,571.5 137.5,572.5 138.5,581.6 139.1,605.4 140.5,633.9 142.1,653.9 143.3,667.5 145.3,675.7 146.9,671.5 148.5,662.5 150.1,677.1 151.7,674.2 153.3,671.7 154.9,674.5 156.5,668.4 158.1,668.8 159.7,676.8 161.3,667.6 162.9,664.4 164.5,661.3 166.1,657.2 167.7,661.4 169.3,664.6 170.9,674.0 172.5,667.6 174.1,671.5 175.7,672.4 177.3,677.3 178.9,677.9 180.5,675.7 182.1,664.5 183.7,678.1 185.3,681.0 186.9,672.8 188.5,662.3 190.1,662.5 191.7,676.4 193.3,686.2 194.9,674.5 196.5,675.3 198.1,677.8 199.7,667.2 201.3,661.8 202.9,664.6 204.5,665.4 206.1,664.7 207.7,657.9 209.3,660.2 210.9,661.9 212.5,662.5 214.1,674.6 215.7,664.1 217.3,661.2 218.9,662.2 220.5,676.7 222.1,675.8 223.7,667.1 225.3,678.0 226.9,673.8 228.5,665.2 230.1,674.4 231.7,661.6 233.3,662.0 234.9,666.0 236.5,665.1 238.1,662.9 239.7,664.7 241.3,659.7 242.9,667.5 244.5,669.5 246.1,662.2 247.7,664.4 249.3,670.3 250.9,662.5 252.5,655.9 254.1,663.3 255.7,671.6 257.3,668.0 258.9,666.1 260.5,665.5 262.1,655.2 263.7,663.5 265.3,653.6 266.9,662.4 268.5,662.6 270.1,653.5 273.5,646.1 273.7,486.6 274.1,483.2 274.3,333.9 275.9,236.2 277.6,236.2 279.6,333.9 280.0,513.8 280.8,517.2 281.1,644.4 282.9,644.4 284.5,643.9 286.1,647.7 287.7,646.0 289.3,647.0 290.9,640.1 292.5,647.0 294.1,655.0 295.7,658.9 297.3,659.1 298.9,654.5 300.5,660.0 302.1,658.9 303.7,650.7 305.3,672.0 306.9,673.9 308.5,667.5 310.1,664.1 311.7,663.7 313.3,667.6 314.9,663.5 316.5,664.1 318.1,669.0 319.7,655.0 321.3,660.5 322.9,668.2 324.5,669.3 326.1,670.7 327.7,670.6 329.3,685.6 330.9,679.9 332.5,669.1 334.1,676.6 335.7,673.9 337.3,667.0 338.9,664.6 340.5,660.0 342.1,675.9 343.7,675.6 345.3,675.5 346.9,670.1 348.5,665.1 350.1,684.0 351.7,671.5 353.3,680.1 354.9,672.1 356.5,680.7 356.9,669.2 357.1,637.7 358.1,644.5 358.4,595.2 359.0,604.5 359.5,637.7 360.2,634.4 360.5,670.9 361.3,671.0 362.9,670.9 364.5,667.5 366.1,669.6 367.7,671.9 369.3,663.9 370.9,663.0 372.5,670.1 374.1,656.3 375.7,671.9 377.3,667.4 378.9,672.0 380.5,671.9 382.1,668.6 383.7,669.8 385.3,668.1 386.9,679.4 388.5,684.4 390.1,674.8 391.7,679.3 393.3,681.7 394.9,685.2 396.5,671.5 398.1,668.3 399.7,662.7 401.3,673.8 402.9,673.5 404.5,679.7 406.1,671.9 407.7,663.7 409.3,673.9 410.9,664.8 412.5,663.9 414.1,670.0 415.2,669.9 415.4,578.6 416.4,585.4 416.7,462.9 417.3,488.1 417.8,578.6 418.5,575.2 418.8,671.6 418.9,672.2 420.5,676.2 422.1,672.3 423.7,670.5 425.3,663.6 426.9,674.6 428.5,667.5 430.1,662.3 431.7,660.2 433.3,668.4 434.9,675.2 436.5,668.4 438.1,670.4 439.7,671.3 441.3,664.4 442.9,670.7 444.5,685.0 446.1,680.7 447.7,687.0 449.3,674.9 450.9,672.2 452.5,676.2 454.1,674.6 455.7,669.2 457.3,671.0 458.9,664.8 459.6,669.9 459.8,650.4 460.8,657.1 461.1,622.4 461.7,628.5 462.2,650.4 462.9,647.0 463.2,671.6 463.7,661.6 465.3,659.0 466.9,670.6 468.5,667.1 470.1,681.0 471.7,682.8 473.3,688.5 474.9,674.2 476.5,680.6 478.1,676.6 479.7,675.8 481.3,674.6 482.9,677.2 484.5,673.7 486.1,663.4 487.7,668.6 489.3,668.2 490.9,665.4 492.5,670.8 494.1,679.2 495.9,669.9 496.1,571.7 497.1,578.5 497.4,447.6 498.0,474.7 498.5,571.7 499.2,568.3 499.5,671.6 500.5,680.1 502.1,670.7 503.7,667.7 505.3,670.7 506.9,667.6 508.5,669.8 510.1,678.3 511.7,684.3 513.3,681.8 514.9,671.9 516.5,675.8 518.1,679.5 519.7,680.4 521.3,685.0 522.9,679.2 524.5,682.5 526.1,675.4 527.5,669.9 527.7,648.8 528.7,655.6 529.0,619.0 529.6,625.5 530.1,648.8 530.8,645.4 531.1,671.6 532.5,686.7 534.1,675.2 535.7,675.7 537.3,686.8 538.9,684.3 540.5,676.6 542.1,677.3 543.7,670.7 545.3,667.9 546.9,667.1 548.5,668.7 550.1,663.7 551.7,665.3 553.3,667.1 554.8,669.9 555.0,595.4 556.0,602.2 556.3,500.2 556.9,521.0 557.4,595.4 558.1,592.0 558.4,671.6 559.7,671.4 561.3,675.1 562.9,663.2 564.5,678.6 566.1,673.0 567.7,659.6 569.3,672.3 570.9,669.0 572.5,660.8 574.1,668.3 575.7,667.9 577.3,665.8 577.9,669.9 578.1,658.0 579.1,664.8 579.4,639.3 580.0,643.4 580.5,658.0 581.2,654.6 581.5,671.6 582.1,672.2 583.7,668.2 585.3,671.2 586.9,673.4 588.5,679.0 590.1,677.9 591.7,670.3 593.3,671.4 594.9,677.2 596.5,679.7 598.1,661.2 598.6,669.9 598.8,588.5 599.8,595.3 600.1,484.9 600.7,507.5 601.2,588.5 601.9,585.1 602.2,671.6 602.9,683.8 604.5,674.5 606.1,671.1 607.7,662.9 609.3,666.2 610.9,670.5 612.5,669.1 614.1,682.3 615.7,671.5 617.3,670.7 617.7,669.9 617.9,665.6 618.9,672.4 619.2,656.3 619.8,658.3 620.3,665.6 621.0,662.2 621.3,671.6 622.1,660.3 623.7,675.3 625.3,677.9 626.9,673.7 628.5,672.4 630.1,675.1 631.7,679.6 633.3,664.2 635.1,669.9 635.3,624.4 636.3,631.2 636.6,564.7 637.2,577.7 637.7,624.4 638.4,621.0 638.7,671.6 639.7,667.6 641.3,665.2 642.9,659.4 644.5,662.5 646.1,673.3 647.7,671.8 649.3,684.7 650.9,682.6 651.3,669.9 651.5,657.2 652.5,664.0 652.8,637.6 653.4,641.9 653.9,657.2 654.6,653.8 654.9,671.6 655.7,676.9 657.3,675.6 658.9,671.7 660.5,670.5 662.1,668.4 663.7,669.9 665.3,673.6 666.3,669.9 666.5,602.2 667.5,609.0 667.8,515.5 668.4,534.4 668.9,602.2 669.6,598.9 669.9,671.6 670.1,676.9 671.7,678.4 673.3,675.6 674.9,674.9 676.5,673.1 678.1,673.2 679.7,672.2 680.5,669.9 680.7,662.6 681.7,669.4 682.0,649.5 682.6,652.4 683.1,662.6 683.8,659.2 684.1,671.6 684.5,674.1 686.1,667.8 687.7,668.3 689.3,672.1 690.9,670.2 692.5,677.3 693.7,669.9 693.9,627.4 694.9,634.2 695.2,571.5 695.8,583.7 696.3,627.4 697.0,624.1 697.3,671.6 698.9,672.5 700.5,679.0 702.1,690.6 703.7,686.9 705.3,670.5 705.8,669.9 706.0,668.7 707.0,675.5 707.3,663.1 707.9,664.3 708.4,668.7 709.1,665.3 709.4,671.6 710.1,681.2 711.7,673.9 713.3,670.8 714.9,671.1 716.5,664.0 717.3,669.9 717.5,609.1 718.5,615.9 718.8,530.7 719.4,547.8 719.9,609.1 720.6,605.7 720.9,671.6 721.3,668.3 722.9,661.8 724.5,662.7 726.1,662.8 727.7,669.9 727.9,661.8 728.9,668.6 729.2,647.8 729.8,650.9 730.3,661.8 731.0,658.4 731.3,671.6 732.5,673.4 734.1,667.3 735.7,667.2 737.5,669.9 737.7,647.3 738.7,654.1 739.0,615.6 739.6,622.5 740.1,647.3 740.8,643.9 741.1,671.6 742.1,659.4 743.7,668.2 745.3,670.5 746.9,657.5 747.4,669.9 747.6,659.5 748.6,666.3 748.9,642.7 749.5,646.4 750.0,659.5 750.7,656.1 751.0,671.6 751.7,664.5 753.3,669.3 754.9,678.0 756.5,674.3 756.8,669.9 757.0,619.8 758.0,626.6 758.3,554.5 758.9,568.7 759.4,619.8 760.1,616.4 760.4,671.6 761.3,665.7 762.9,669.7 764.5,666.9 765.9,669.9 766.1,661.0 767.1,667.8 767.4,646.1 768.0,649.4 768.5,661.0 769.2,657.6 769.5,671.6 770.9,673.7 772.5,669.6 774.1,677.5 774.5,669.9 774.7,643.5 775.7,650.3 776.0,607.1 776.6,615.0 777.1,643.5 777.8,640.1 778.1,671.6 778.9,682.5 780.5,679.9 782.1,687.5 782.8,669.9 783.0,664.1 784.0,670.9 784.3,652.9 784.9,655.3 785.4,664.1 786.1,660.7 786.4,671.6 786.9,670.7 788.5,672.4 790.1,674.2 790.8,669.9 791.0,628.2 792.0,635.0 792.3,573.1 792.9,585.2 793.4,628.2 794.1,624.8 794.4,671.6 794.9,667.5 796.5,664.5 798.1,674.3 798.4,669.9 798.6,667.2 799.6,673.9 799.9,659.7 800.5,661.3 801.0,667.2 801.7,663.8 802.0,671.6 802.9,673.8 804.5,668.3 805.8,669.9 806.0,661.0 807.0,667.8 807.3,646.1 807.9,649.4 808.4,661.0 809.1,657.6 809.4,671.6 810.9,682.4 812.5,687.6 812.9,669.9 813.1,665.6 814.1,672.4 814.4,656.3 815.0,658.3 815.5,665.6 816.2,662.2 816.5,671.6 817.3,685.2 818.9,678.5 819.8,669.9 820.0,631.3 821.0,638.1 821.3,579.9 821.9,591.1 822.4,631.3 823.1,627.9 823.4,671.6 823.7,667.9 825.3,662.4 826.9,661.9 828.5,675.5 830.1,677.1 831.7,680.9 832.9,669.9 833.1,645.8 834.1,652.6 834.4,612.2 835.0,619.5 835.5,645.8 836.2,642.4 836.5,671.6 838.1,671.5 839.7,681.3 841.3,683.8 842.9,678.1 844.5,676.6 845.2,669.9 845.4,659.5 846.4,666.3 846.7,642.7 847.3,646.4 847.8,659.5 848.5,656.1 848.8,671.6 849.3,678.3 850.9,671.6 852.5,670.5 854.1,672.5 855.7,676.7 856.8,669.9 857.0,648.8 858.0,655.6 858.3,619.0 858.9,625.5 859.4,648.8 860.1,645.4 860.4,671.6 862.1,678.8 863.7,684.2 865.3,677.1 866.9,674.1 867.8,669.9 868.0,648.8 869.0,655.6 869.3,619.0 869.9,625.5 870.4,648.8 871.1,645.4 871.4,671.6 871.7,677.3 873.3,672.5 874.9,669.5 876.5,671.8 878.2,669.9 878.4,658.8 879.4,665.5 879.7,641.0 880.3,644.9 880.8,658.8 881.5,655.4 881.8,671.6 882.9,669.8 884.5,670.1 886.1,675.9 887.9,669.9 888.1,652.6 889.1,659.4 889.4,627.4 890.0,632.9 890.5,652.6 891.2,649.2 891.5,671.6 892.5,682.6 894.1,678.1 895.7,678.2 897.2,669.9 897.4,670.2 898.4,677.0 898.7,666.5 899.3,667.3 899.8,670.2 900.5,666.8 900.8,671.6 902.1,660.8 903.7,669.5 905.3,665.4 906.0,669.9 906.2,646.5 907.2,653.3 907.5,613.9 908.1,621.0 908.6,646.5 909.3,643.1 909.6,671.6 910.1,682.9 911.7,681.8 913.3,675.7 914.9,671.0 916.5,659.2 918.1,665.1 919.7,662.4 921.3,664.1 922.6,667.5 922.8,663.6 923.8,670.3 924.1,654.6 924.7,656.5 925.2,663.6 925.9,660.2 926.2,669.2 927.7,668.4 929.3,673.0 930.9,668.3 932.5,672.8 934.1,671.0 935.7,664.6 937.3,668.7 937.9,667.5 938.1,662.0 939.1,668.8 939.4,651.2 940.0,653.6 940.5,662.0 941.2,658.6 941.5,669.2 942.1,669.0 943.7,672.5 945.2,667.5 945.4,660.5 946.4,667.3 946.7,647.8 947.3,650.6 947.8,660.5 948.5,657.1 948.8,669.2 950.1,671.9 951.7,666.1 953.3,663.8 954.9,667.6 956.5,668.6 958.1,671.1 958.9,667.5 959.1,662.8 960.1,669.6 960.4,652.9 961.0,655.1 961.5,662.8 962.2,659.4 962.5,669.2 962.9,669.0 964.5,671.5 966.1,673.2 967.7,669.8 969.3,666.4 970.9,668.9 972.0,667.5 972.2,664.3 973.2,671.1 973.5,656.3 974.1,658.0 974.6,664.3 975.3,660.9 975.6,669.2 977.3,669.6 978.9,665.8 980.5,665.2 982.1,669.9 983.7,663.6 984.3,667.5 984.5,666.6 985.5,673.4 985.8,661.4 986.4,662.5 986.9,666.6 987.6,663.2 987.9,669.2 988.5,671.1 990.1,671.1 991.7,676.2 993.3,667.9 994.9,665.5 995.9,667.5 996.1,665.1 997.1,671.9 997.4,658.0 998.0,659.5 998.5,665.1 999.2,661.7 999.5,669.2 999.7,678.0 1001.3,670.6 1002.9,672.1 1004.5,671.6 1006.1,672.1 1007.7,671.8 1009.3,674.6 1010.9,672.5 1012.2,667.5 1012.4,665.8 1013.4,672.6 1013.7,659.7 1014.3,661.0 1014.8,665.8 1015.5,662.5 1015.8,669.2 1017.3,669.6 1018.9,671.0 1020.5,673.6 1022.1,671.6 1023.7,672.7 1025.3,667.0 1026.9,667.5 1027.1,666.6 1028.1,673.4 1028.4,661.4 1029.0,662.5 1029.5,666.6 1030.2,663.2 1030.5,669.2 1031.7,673.3 1033.3,674.8 1034.9,673.7 1036.5,671.3 1038.1,669.5 1039.7,668.6 1040.5,667.5 1040.7,665.8 1041.7,672.6 1042.0,659.7 1042.6,661.0 1043.1,665.8 1043.8,662.5 1044.1,669.2 1044.5,670.3 1046.1,662.3 1047.7,672.6 1049.3,673.2 1050.9,671.4 1052.5,670.7 1054.1,669.6 1055.7,671.0 1057.3,669.8 1058.9,670.3 1060.5,668.3 1062.1,675.4 1063.7,675.5 1065.3,673.0 1066.9,674.9 1068.5,675.8 1070.1,671.2 1071.7,673.0 1073.3,669.9 1074.9,668.2 1076.5,668.8 1078.1,668.4 1079.7,670.1 1081.3,674.7 1082.9,672.7 1084.5,670.3 1086.1,672.2 1087.7,671.8 1089.3,669.1 1090.9,672.7 1092.5,669.8 1094.1,664.8 1095.7,669.8 1097.3,670.0 1098.9,670.9 1100.5,667.2 1102.1,668.4 1103.7,667.6 1105.3,671.1 1106.9,671.0 1108.5,671.0 1110.1,675.2 1111.7,669.3 1113.3,668.0 1114.9,673.8 1116.5,670.4 1118.1,671.0 1119.7,669.8 1121.3,669.5 1122.9,673.9 1124.5,672.8 1126.1,668.1 1127.7,671.0 1129.3,673.4 1130.9,675.3 1132.5,675.8 1134.1,672.3 1135.7,667.4 1137.3,668.3 1138.9,669.1 1140.5,664.7 1142.1,669.3 1143.7,671.8 1145.3,670.0 1146.9,669.2 1148.5,672.6 1150.1,674.5 1151.7,671.8 1153.3,670.7 1154.9,674.0 1156.5,672.8 1158.1,673.0 1159.7,670.7 1161.3,671.1 1162.9,671.2 1164.5,671.9 1166.1,668.8 1167.7,666.6 1169.3,669.8 1170.9,668.4 1172.5,671.6 1174.1,671.0 1175.7,669.1 1177.3,666.4 1178.9,669.8 1180.5,670.6 1182.1,670.3 1183.7,674.2 1185.3,672.4 1186.9,673.2 1188.5,671.0 1190.1,673.7 1191.7,676.9 1193.3,673.5 1194.9,671.4 1196.5,672.5 1198.1,669.4 1199.7,670.9 1201.3,672.4 1202.9,670.4 1204.5,674.5 1206.1,674.1 1207.7,672.4 1209.3,669.5 1210.9,670.7 1212.5,670.0 1214.1,672.1 1215.7,670.7 1217.3,666.8 1218.9,670.7 1220.5,665.1 1222.1,669.8 1223.7,670.4 1225.3,670.2 1226.9,668.1 1228.5,672.6 1230.1,676.8 1231.7,672.1 1233.3,669.5 1234.9,668.7 1236.5,663.5 1238.1,667.1 1239.7,668.6 1241.3,667.6 1242.9,668.5 1244.5,665.8 1246.1,671.6 1247.7,672.1 1249.3,679.8 1250.9,672.9 1252.5,672.7 1254.1,669.5 1255.7,665.0 1257.3,668.3 1258.9,670.3 1260.5,671.8 1262.1,673.3 1263.7,673.5 1265.3,670.5 1266.9,670.6 1268.5,670.6 1270.1,671.2 1271.7,668.8 1273.3,668.7 1274.9,670.3 1276.5,669.0 1278.1,670.4 1279.7,673.5 1281.3,668.5 1282.9,668.7 1284.5,672.2 1286.1,668.9 1287.7,669.1 1289.3,673.9 1290.9,668.3 1292.5,668.9" fill="none" stroke="#1010a4" stroke-width="1.3" stroke-linejoin="round"/>
<rect x="76.40" y="810.00" width="20.30" height="18.40" fill="#747474"/>
<rect x="76.40" y="810.00" width="18.80" height="16.90" fill="#fafafa"/>
<rect x="77.40" y="811.00" width="17.80" height="15.90" fill="#efefef"/>
<path transform="translate(76.40,810.00)" d="M11.6 5.2V13L6.6 9.1Z" fill="#000"/>
<rect x="104.00" y="810.00" width="19.40" height="18.40" fill="#747474"/>
<rect x="104.00" y="810.00" width="17.90" height="16.90" fill="#fafafa"/>
<rect x="105.00" y="811.00" width="16.90" height="15.90" fill="#efefef"/>
<rect x="1273.60" y="810.00" width="20.30" height="18.40" fill="#747474"/>
<rect x="1273.60" y="810.00" width="18.80" height="16.90" fill="#fafafa"/>
<rect x="1274.60" y="811.00" width="17.80" height="15.90" fill="#efefef"/>
<path transform="translate(1273.60,810.00)" d="M8 5.2V13L13 9.1Z" fill="#000"/>
<rect x="1237.70" y="233.00" width="54.50" height="28.80" fill="#000"/>
<rect x="1243.00" y="236.60" width="44.60" height="1.30" fill="#fff"/>
<rect x="1243.00" y="256.60" width="44.60" height="1.30" fill="#fff"/>
<rect x="1303.60" y="230.50" width="27.20" height="598.20" fill="#fff"/>
<rect x="1303.60" y="230.50" width="25.70" height="597.00" fill="#858585"/>
<rect x="1305.60" y="232.70" width="23.70" height="594.80" fill="#f0f0f0"/>
<rect x="1308.00" y="234.30" width="19.00" height="573.80" fill="#0000ee"/>
<path d="M73.5 232.1h3.5M73.5 266.0h3.5M73.5 300.0h3.5M73.5 333.9h3.5M73.5 367.8h3.5M73.5 401.8h3.5M73.5 435.7h3.5M73.5 469.6h3.5M73.5 503.6h3.5M73.5 537.5h3.5M73.5 571.5h3.5M73.5 605.4h3.5M73.5 639.3h3.5M73.5 673.3h3.5M73.5 707.2h3.5M73.5 741.1h3.5M73.5 775.1h3.5M73.5 809.0h3.5M92.0 828.2v3.6M136.1 828.2v3.6M173.2 828.2v3.6M204.0 828.2v3.6M231.2 828.2v3.6M255.0 828.2v3.6M275.4 828.2v3.6M415.9 828.2v3.6M496.6 828.2v3.6M555.5 828.2v3.6M599.3 828.2v3.6M635.8 828.2v3.6M667.0 828.2v3.6M694.4 828.2v3.6M718.0 828.2v3.6M738.2 828.2v3.6M878.9 828.2v3.6M959.6 828.2v3.6M1018.0 828.2v3.6M1062.0 828.2v3.6M1099.0 828.2v3.6M1130.0 828.2v3.6M1157.4 828.2v3.6M1181.2 828.2v3.6M1202.8 828.2v3.6M1329.3 232.1h3.3M1329.3 266.0h3.3M1329.3 300.0h3.3M1329.3 333.9h3.3M1329.3 367.8h3.3M1329.3 401.8h3.3M1329.3 435.7h3.3M1329.3 469.6h3.3M1329.3 503.6h3.3M1329.3 537.5h3.3M1329.3 571.5h3.3M1329.3 605.4h3.3M1329.3 639.3h3.3M1329.3 673.3h3.3M1329.3 707.2h3.3M1329.3 741.1h3.3M1329.3 775.1h3.3M1329.3 809.0h3.3" stroke="#111" stroke-width="1.6" fill="none"/>
<rect x="1313.30" y="851.00" width="11.00" height="10.60" fill="#747474"/>
<rect x="1313.30" y="851.00" width="9.70" height="9.30" fill="#fafafa"/>
<rect x="1314.30" y="852.00" width="8.70" height="8.30" fill="#efefef"/>
<rect x="1316.60" y="857.30" width="4.00" height="1.30" fill="#222"/>
<defs><filter id="sh" x="-20%" y="-30%" width="140%" height="170%"><feGaussianBlur stdDeviation="2.6"/></filter></defs>
<rect x="82.60" y="238.10" width="143.60" height="67.80" fill="#000" opacity="0.5" filter="url(#sh)"/>
<rect x="82.70" y="237.20" width="143.40" height="67.60" fill="rgba(0,0,0,0.18)"/>
<rect x="83.10" y="237.60" width="142.60" height="66.80" fill="#fff"/>
<rect x="83.10" y="273.80" width="142.60" height="30.60" fill="#f0f0f0"/>
<g transform="translate(91.70,246.00)"><rect x="1.5" y="1.5" width="16.6" height="16.4" fill="#fff" stroke="#111" stroke-width="1.5"/><path d="M6.7 5.4v5.2M12.5 5.4v5.2" stroke="#111" stroke-width="1.7"/></g>
<path transform="translate(199.70,249.80)" d="M0.5 0.5L11.5 11.3M11.5 0.5L0.5 11.3" stroke="#868686" stroke-width="1.15" fill="none"/>
<rect x="258.70" y="242.10" width="143.60" height="67.80" fill="#000" opacity="0.5" filter="url(#sh)"/>
<rect x="258.80" y="241.20" width="143.40" height="67.60" fill="rgba(0,0,0,0.18)"/>
<rect x="259.20" y="241.60" width="142.60" height="66.80" fill="#fff"/>
<rect x="259.20" y="277.80" width="142.60" height="30.60" fill="#f0f0f0"/>
<g transform="translate(267.80,250.00)"><rect x="1.5" y="1.5" width="16.6" height="16.4" fill="#fff" stroke="#111" stroke-width="1.5"/><path d="M6.7 5.4v5.2M12.5 5.4v5.2" stroke="#111" stroke-width="1.7"/></g>
<path transform="translate(375.80,253.80)" d="M0.5 0.5L11.5 11.3M11.5 0.5L0.5 11.3" stroke="#868686" stroke-width="1.15" fill="none"/>
<rect x="258.70" y="317.10" width="143.60" height="67.80" fill="#000" opacity="0.5" filter="url(#sh)"/>
<rect x="258.80" y="316.20" width="143.40" height="67.60" fill="rgba(0,0,0,0.18)"/>
<rect x="259.20" y="316.60" width="142.60" height="66.80" fill="#fff"/>
<rect x="259.20" y="352.80" width="142.60" height="30.60" fill="#f0f0f0"/>
<g transform="translate(267.80,325.00)"><rect x="1.5" y="1.5" width="16.6" height="16.4" fill="#fff" stroke="#111" stroke-width="1.5"/><path d="M6.7 5.4v5.2M12.5 5.4v5.2" stroke="#111" stroke-width="1.7"/></g>
<path transform="translate(375.80,328.80)" d="M0.5 0.5L11.5 11.3M11.5 0.5L0.5 11.3" stroke="#868686" stroke-width="1.15" fill="none"/>
<rect x="417.50" y="243.60" width="143.60" height="67.80" fill="#000" opacity="0.5" filter="url(#sh)"/>
<rect x="417.60" y="242.70" width="143.40" height="67.60" fill="rgba(0,0,0,0.18)"/>
<rect x="418.00" y="243.10" width="142.60" height="66.80" fill="#fff"/>
<rect x="418.00" y="279.30" width="142.60" height="30.60" fill="#f0f0f0"/>
<g transform="translate(426.60,251.50)"><rect x="1.5" y="1.5" width="16.6" height="16.4" fill="#fff" stroke="#111" stroke-width="1.5"/><path d="M6.7 5.4v5.2M12.5 5.4v5.2" stroke="#111" stroke-width="1.7"/></g>
<path transform="translate(534.60,255.30)" d="M0.5 0.5L11.5 11.3M11.5 0.5L0.5 11.3" stroke="#868686" stroke-width="1.15" fill="none"/>
<rect x="2.30" y="871.50" width="139.20" height="22.50" fill="#fff"/>
<rect x="2.30" y="871.50" width="138.20" height="22.50" fill="#a0a0a0"/>
<rect x="3.80" y="873.00" width="136.70" height="21.00" fill="#f0f0f0"/>
<rect x="145.00" y="871.50" width="119.50" height="22.50" fill="#fff"/>
<rect x="145.00" y="871.50" width="118.50" height="22.50" fill="#a0a0a0"/>
<rect x="146.50" y="873.00" width="117.00" height="21.00" fill="#f0f0f0"/>
<rect x="266.70" y="871.50" width="84.50" height="22.50" fill="#fff"/>
<rect x="266.70" y="871.50" width="83.50" height="22.50" fill="#a0a0a0"/>
<rect x="268.20" y="873.00" width="82.00" height="21.00" fill="#f0f0f0"/>
<rect x="353.70" y="871.50" width="60.00" height="22.50" fill="#fff"/>
<rect x="353.70" y="871.50" width="59.00" height="22.50" fill="#a0a0a0"/>
<rect x="355.20" y="873.00" width="57.50" height="21.00" fill="#f0f0f0"/>
<rect x="417.00" y="871.50" width="71.50" height="22.50" fill="#fff"/>
<rect x="417.00" y="871.50" width="70.50" height="22.50" fill="#a0a0a0"/>
<rect x="418.50" y="873.00" width="69.00" height="21.00" fill="#f0f0f0"/>
<rect x="491.00" y="871.50" width="120.20" height="22.50" fill="#fff"/>
<rect x="491.00" y="871.50" width="119.20" height="22.50" fill="#a0a0a0"/>
<rect x="492.50" y="873.00" width="117.70" height="21.00" fill="#f0f0f0"/>
<rect x="614.50" y="871.50" width="87.20" height="22.50" fill="#fff"/>
<rect x="614.50" y="871.50" width="86.20" height="22.50" fill="#a0a0a0"/>
<rect x="616.00" y="873.00" width="84.70" height="21.00" fill="#f0f0f0"/>
<rect x="704.00" y="871.50" width="674.50" height="22.50" fill="#fff"/>
<rect x="704.00" y="871.50" width="673.50" height="22.50" fill="#a0a0a0"/>
<rect x="705.50" y="873.00" width="672.00" height="21.00" fill="#f0f0f0"/>
</svg>
<div class="t f" style="transform:scaleX(0.942);left:27.9px;top:6.0px;font-size:14.2px;font-family:'Liberation Sans',sans-serif;color:#000;">SpectraPLUS Professional Edition</div>
<div class="t f" style="transform:scaleX(0.945);left:4.7px;top:35.2px;font-size:14.5px;font-family:'Liberation Sans',sans-serif;color:#000;">File</div>
<div class="t f" style="transform:scaleX(0.980);left:42.8px;top:35.2px;font-size:14.5px;font-family:'Liberation Sans',sans-serif;color:#000;">Edit</div>
<div class="t f" style="transform:scaleX(1.023);left:83.4px;top:35.2px;font-size:14.5px;font-family:'Liberation Sans',sans-serif;color:#000;">Mode</div>
<div class="t f" style="transform:scaleX(0.988);left:136.7px;top:35.2px;font-size:14.5px;font-family:'Liberation Sans',sans-serif;color:#000;">View</div>
<div class="t f" style="transform:scaleX(1.018);left:182.8px;top:35.2px;font-size:14.5px;font-family:'Liberation Sans',sans-serif;color:#000;">Options</div>
<div class="t f" style="transform:scaleX(1.012);left:249.6px;top:35.2px;font-size:14.5px;font-family:'Liberation Sans',sans-serif;color:#000;">Utilities</div>
<div class="t f" style="transform:scaleX(1.028);left:312.9px;top:35.2px;font-size:14.5px;font-family:'Liberation Sans',sans-serif;color:#000;">Config</div>
<div class="t f" style="transform:scaleX(0.946);left:372.5px;top:35.2px;font-size:14.5px;font-family:'Liberation Sans',sans-serif;color:#000;">License</div>
<div class="t f" style="transform:scaleX(1.033);left:435.2px;top:35.2px;font-size:14.5px;font-family:'Liberation Sans',sans-serif;color:#000;">Window</div>
<div class="t f" style="transform:scaleX(1.009);left:504.7px;top:35.2px;font-size:14.5px;font-family:'Liberation Sans',sans-serif;color:#000;">Help</div>
<div class="t f" style="transform:scaleX(0.958);left:12.4px;top:76.2px;font-size:14px;font-family:'Liberation Sans',sans-serif;color:#000;">Run</div>
<div class="t f" style="transform:scaleX(0.937);left:60.6px;top:76.7px;font-size:14px;font-family:'Liberation Sans',sans-serif;color:#000;">Stop</div>
<div class="t f" style="transform:scaleX(0.943);left:115.9px;top:68.7px;font-size:14.6px;font-family:'Liberation Sans',sans-serif;color:#000;">Avg:</div>
<div class="t f" style="transform:scaleX(1.007);left:237.6px;top:68.7px;font-size:14.6px;font-family:'Liberation Sans',sans-serif;color:#000;">Peak Hold:</div>
<div class="t f" style="transform:scaleX(1.008);left:152.8px;top:69.4px;font-size:14.8px;font-family:'Liberation Sans',sans-serif;color:#000;">15</div>
<div class="t f" style="transform:scaleX(0.976);left:318.3px;top:69.4px;font-size:14.8px;font-family:'Liberation Sans',sans-serif;color:#000;">Off</div>
<div class="t f" style="transform:scaleX(1.001);left:430.5px;top:69.4px;font-size:14.8px;font-family:'Liberation Sans',sans-serif;color:#000;">Load Configuration</div>
<div class="bt" style="left:457.10px;top:99.05px;width:33px;height:32.4px"><div class="s" style="transform:scaleX(0.879);top:7.9px;font-size:16.6px;">Trig</div></div>
<div class="bt" style="left:492.80px;top:99.05px;width:33px;height:32.4px"><div class="s" style="transform:scaleX(0.885);top:7.9px;font-size:16.6px;">Mrk</div></div>
<div class="bt" style="left:528.50px;top:99.05px;width:33px;height:32.4px"><div class="s" style="transform:scaleX(0.899);top:7.9px;font-size:16.6px;">I/O</div></div>
<div class="bt" style="left:619.20px;top:99.05px;width:33px;height:32.4px"><div class="s" style="transform:scaleX(0.873);top:7.9px;font-size:16.6px;">Hz</div></div>
<div class="bt" style="left:654.80px;top:99.05px;width:33px;height:32.4px"><div class="s" style="transform:scaleX(0.779);top:7.9px;font-size:16.6px;">dB</div></div>
<div class="bt" style="left:690.50px;top:99.05px;width:33px;height:32.4px"><div class="s" style="transform:scaleX(0.864);top:7.9px;font-size:16.6px;">Pwr</div></div>
<div class="bt" style="left:735.80px;top:99.05px;width:33px;height:32.4px"><div class="s" style="transform:scaleX(0.689);top:8.5px;font-size:16.4px;">THD</div></div>
<div class="bt" style="left:771.40px;top:99.05px;width:33px;height:32.4px"><div class="s" style="transform:scaleX(0.789);top:4.9px;font-size:14.3px;">THD</div><div class="s" style="transform:scaleX(1.260);top:20px;font-size:9.5px;">+N</div></div>
<div class="bt" style="left:807.10px;top:99.05px;width:33px;height:32.4px"><div class="s" style="transform:scaleX(0.863);top:1.6px;font-size:13.2px;">THD</div><div class="s" style="transform:scaleX(0.934);top:14.4px;font-size:13.2px;">Freq</div></div>
<div class="bt" style="left:852.20px;top:99.05px;width:33px;height:32.4px"><div class="s" style="transform:scaleX(0.784);top:7.9px;font-size:16.6px;">IMD</div></div>
<div class="bt" style="left:887.90px;top:99.05px;width:33px;height:32.4px"><div class="s" style="transform:scaleX(0.787);top:7.9px;font-size:16.6px;">SNR</div></div>
<div class="bt" style="left:923.60px;top:99.05px;width:33px;height:32.4px"><div class="s" style="transform:scaleX(0.922);top:7.9px;font-size:16.6px;">Leq</div></div>
<div class="bt" style="left:968.60px;top:99.05px;width:33px;height:32.4px"><div class="s" style="transform:scaleX(0.868);top:7.9px;font-size:16.6px;">Mac</div></div>
<div class="bt" style="left:1004.30px;top:99.05px;width:33px;height:32.4px"><div class="s" style="transform:scaleX(0.890);top:7.9px;font-size:16.6px;">Log</div></div>
<div class="bt" style="left:1049.40px;top:99.05px;width:33px;height:32.4px"><div class="s" style="transform:scaleX(0.852);top:7.9px;font-size:16.6px;">Dly</div></div>
<div class="bt" style="left:1085.10px;top:99.05px;width:33px;height:32.4px"><div class="s" style="transform:scaleX(0.911);top:7.9px;font-size:16.6px;">Rvb</div></div>
<div class="bt" style="left:1120.80px;top:99.05px;width:33px;height:32.4px"><div class="s" style="transform:scaleX(0.876);top:7.9px;font-size:16.6px;">Scp</div></div>
<div class="t f" style="transform:scaleX(0.993);left:30.4px;top:152.1px;font-size:14.5px;font-family:'Liberation Sans',sans-serif;color:#111;">Spectrum</div>
<div class="bt" style="left:43.00px;top:173.90px;width:33px;height:32.5px"><div class="i" style="transform:scaleX(1.071);left:17.1px;top:5.6px;font-size:8.6px;font-weight:bold">IN</div><div class="i" style="transform:scaleX(0.739);left:14px;top:15.4px;font-size:14.6px;font-weight:normal">2X</div></div>
<div class="bt" style="left:78.70px;top:173.90px;width:33px;height:32.5px"><div class="i" style="transform:scaleX(0.871);left:12.6px;top:5.8px;font-size:8.4px;font-weight:bold">OUT</div><div class="i" style="transform:scaleX(0.739);left:14px;top:15.4px;font-size:14.6px;font-weight:normal">2X</div></div>
<div class="bt" style="left:114.50px;top:173.90px;width:33px;height:32.5px"><div class="i" style="transform:scaleX(0.871);left:12.6px;top:5.8px;font-size:8.4px;font-weight:bold">OUT</div><div class="i" style="transform:scaleX(0.813);left:11.4px;top:16.6px;font-size:8.2px;font-weight:bold">FULL</div></div>
<div class="t f" style="transform:scaleX(1.033);left:361.2px;top:183.2px;font-size:14.6px;font-family:'Liberation Sans',sans-serif;color:#000;">Plot Top:</div>
<div class="t f" style="transform:scaleX(1.010);left:501.5px;top:183.2px;font-size:14.6px;font-family:'Liberation Sans',sans-serif;color:#000;">Plot Range:</div>
<div class="t f" style="transform:scaleX(1.007);left:425.0px;top:183.0px;font-size:14.6px;font-family:'Liberation Sans',sans-serif;color:#000;">0.00</div>
<div class="t f" style="transform:scaleX(0.972);left:584.8px;top:183.0px;font-size:14.6px;font-family:'Liberation Sans',sans-serif;color:#000;">170.0</div>
<div class="t" style="left:672.3px;top:212.7px;font-size:14.4px">Left</div>
<div class="t" style="left:1237.7px;top:237.2px;width:54.5px;text-align:center;font-family:'Liberation Serif',serif;font-weight:bold;font-size:22px;color:#fff;letter-spacing:0.2px">PHS</div>
<div class="yl" style="right:1311.7px;top:223.7px">0.0</div>
<div class="yl" style="left:1337px;top:223.7px">0.0</div>
<div class="yl" style="right:1311.7px;top:257.6px">-10.0</div>
<div class="yl" style="left:1337px;top:257.6px">-10.0</div>
<div class="yl" style="right:1311.7px;top:291.6px">-20.0</div>
<div class="yl" style="left:1337px;top:291.6px">-20.0</div>
<div class="yl" style="right:1311.7px;top:325.5px">-30.0</div>
<div class="yl" style="left:1337px;top:325.5px">-30.0</div>
<div class="yl" style="right:1311.7px;top:359.4px">-40.0</div>
<div class="yl" style="left:1337px;top:359.4px">-40.0</div>
<div class="yl" style="right:1311.7px;top:393.4px">-50.0</div>
<div class="yl" style="left:1337px;top:393.4px">-50.0</div>
<div class="yl" style="right:1311.7px;top:427.3px">-60.0</div>
<div class="yl" style="left:1337px;top:427.3px">-60.0</div>
<div class="yl" style="right:1311.7px;top:461.2px">-70.0</div>
<div class="yl" style="left:1337px;top:461.2px">-70.0</div>
<div class="yl" style="right:1311.7px;top:495.2px">-80.0</div>
<div class="yl" style="left:1337px;top:495.2px">-80.0</div>
<div class="yl" style="right:1311.7px;top:529.1px">-90.0</div>
<div class="yl" style="left:1337px;top:529.1px">-90.0</div>
<div class="yl" style="right:1311.7px;top:563.1px">-100.0</div>
<div class="yl" style="left:1337px;top:563.1px">-100.0</div>
<div class="yl" style="right:1311.7px;top:597.0px">-110.0</div>
<div class="yl" style="left:1337px;top:597.0px">-110.0</div>
<div class="yl" style="right:1311.7px;top:630.9px">-120.0</div>
<div class="yl" style="left:1337px;top:630.9px">-120.0</div>
<div class="yl" style="right:1311.7px;top:664.9px">-130.0</div>
<div class="yl" style="left:1337px;top:664.9px">-130.0</div>
<div class="yl" style="right:1311.7px;top:698.8px">-140.0</div>
<div class="yl" style="left:1337px;top:698.8px">-140.0</div>
<div class="yl" style="right:1311.7px;top:732.7px">-150.0</div>
<div class="yl" style="left:1337px;top:732.7px">-150.0</div>
<div class="yl" style="right:1311.7px;top:766.7px">-160.0</div>
<div class="yl" style="left:1337px;top:766.7px">-160.0</div>
<div class="yl" style="right:1311.7px;top:800.6px">-170.0</div>
<div class="yl" style="left:1337px;top:800.6px">-170.0</div>
<div class="yl" style="left:61.8px;top:833.2px;width:60px;text-align:center">40</div>
<div class="yl" style="left:105.9px;top:833.2px;width:60px;text-align:center">50</div>
<div class="yl" style="left:143.0px;top:833.2px;width:60px;text-align:center">60</div>
<div class="yl" style="left:201.0px;top:833.2px;width:60px;text-align:center">80</div>
<div class="yl" style="left:245.2px;top:833.2px;width:60px;text-align:center">100</div>
<div class="yl" style="left:385.7px;top:833.2px;width:60px;text-align:center">200</div>
<div class="yl" style="left:466.4px;top:833.2px;width:60px;text-align:center">300</div>
<div class="yl" style="left:525.3px;top:833.2px;width:60px;text-align:center">400</div>
<div class="yl" style="left:569.1px;top:833.2px;width:60px;text-align:center">500</div>
<div class="yl" style="left:605.6px;top:833.2px;width:60px;text-align:center">600</div>
<div class="yl" style="left:664.2px;top:833.2px;width:60px;text-align:center">800</div>
<div class="yl" style="left:708.0px;top:833.2px;width:60px;text-align:center">1.0k</div>
<div class="yl" style="left:848.7px;top:833.2px;width:60px;text-align:center">2.0k</div>
<div class="yl" style="left:929.4px;top:833.2px;width:60px;text-align:center">3.0k</div>
<div class="yl" style="left:987.8px;top:833.2px;width:60px;text-align:center">4.0k</div>
<div class="yl" style="left:1031.8px;top:833.2px;width:60px;text-align:center">5.0k</div>
<div class="yl" style="left:1068.8px;top:833.2px;width:60px;text-align:center">6.0k</div>
<div class="yl" style="left:1127.2px;top:833.2px;width:60px;text-align:center">8.0k</div>
<div class="yl" style="left:1172.6px;top:833.2px;width:60px;text-align:center">10.0k</div>
<div class="yl" style="left:760.2px;top:847.7px">Frequency (Hz)</div>
<div class="yl" style="left:1305px;top:833.2px">Pwr</div>
<div class="yl" style="left:20.6px;top:526.5px;width:0;height:0"><div style="position:absolute;left:-100px;top:-8px;width:200px;text-align:center;transform:rotate(-90deg);transform-origin:50% 50%;font-size:14.4px;line-height:16px;letter-spacing:0.72px">Relative Amplitude (dB)</div></div>
<div class="ttl" style="transform:scaleX(0.962);left:115.1px;top:247.9px">Total Pwr</div>
<div class="val" style="left:92.8px;top:277.0px;transform:scaleX(1.27)">-1.05 dB</div>
<div class="ttl" style="transform:scaleX(0.986);left:291.2px;top:251.9px">THD+N</div>
<div class="val" style="left:268.8px;top:281.0px;transform:scaleX(1.03)">0.09514 %</div>
<div class="ttl" style="transform:scaleX(0.893);left:291.2px;top:326.9px">THD</div>
<div class="val" style="left:268.8px;top:356.0px;transform:scaleX(1.03)">0.09515 %</div>
<div class="ttl" style="transform:scaleX(0.971);left:450.0px;top:253.4px">SNR</div>
<div class="val" style="left:428.8px;top:282.5px;transform:scaleX(1.04)">60.433 dB</div>
<div class="t f" style="transform:scaleX(0.991);left:5.7px;top:873.7px;font-size:15px;font-family:'Liberation Sans',sans-serif;color:#000;">Stopped</div>
<div class="t f" style="transform:scaleX(1.004);left:148.8px;top:873.7px;font-size:15px;font-family:'Liberation Sans',sans-serif;color:#000;">Real Time</div>
<div class="t f" style="transform:scaleX(0.973);left:271.8px;top:873.7px;font-size:15px;font-family:'Liberation Sans',sans-serif;color:#000;">44100 Hz</div>
<div class="t f" style="transform:scaleX(0.946);left:358.8px;top:873.7px;font-size:15px;font-family:'Liberation Sans',sans-serif;color:#000;">24 Bit</div>
<div class="t f" style="transform:scaleX(0.946);left:421.4px;top:873.7px;font-size:15px;font-family:'Liberation Sans',sans-serif;color:#000;">Mono</div>
<div class="t f" style="transform:scaleX(0.963);left:496.2px;top:873.7px;font-size:15px;font-family:'Liberation Sans',sans-serif;color:#000;">FFT 131072 pts</div>
<div class="t f" style="transform:scaleX(1.030);left:618.6px;top:873.7px;font-size:15px;font-family:'Liberation Sans',sans-serif;color:#000;">Kaiser</div>
</div></body></html>
